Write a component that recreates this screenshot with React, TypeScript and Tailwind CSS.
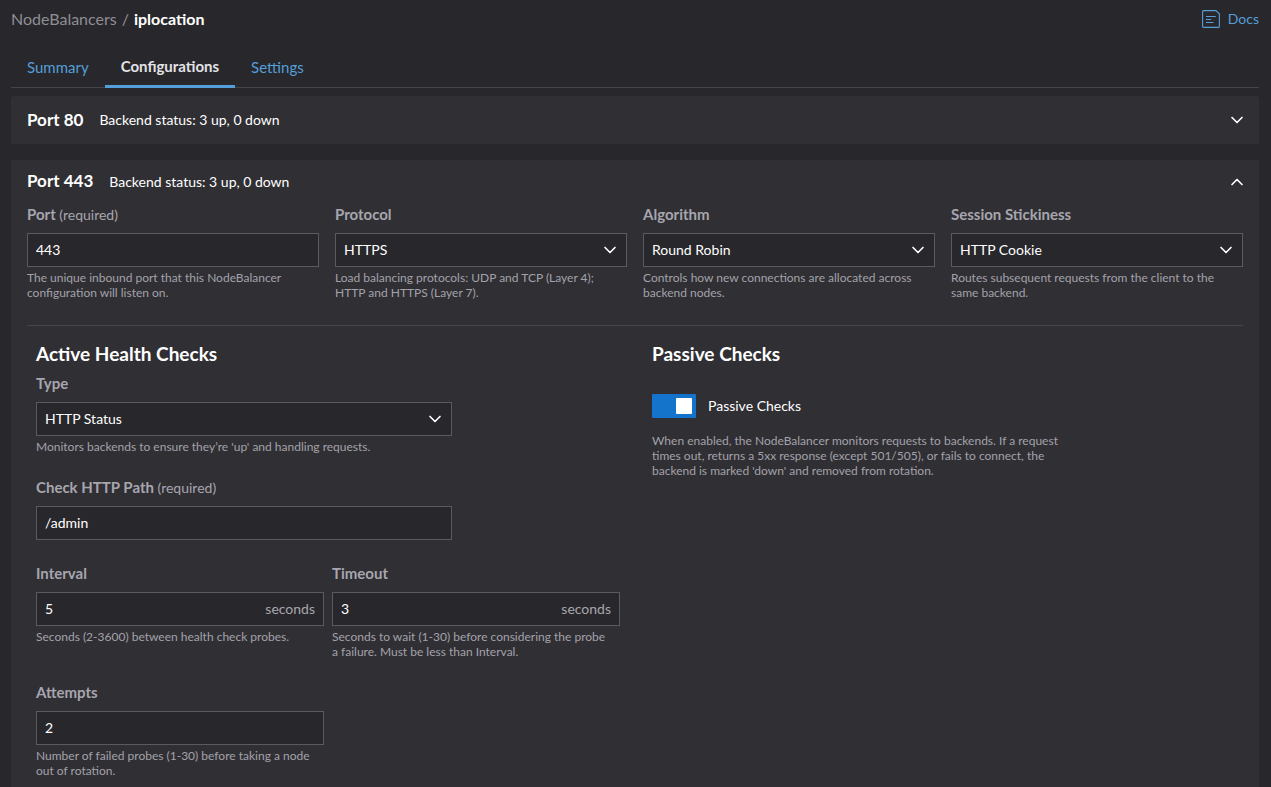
import React, { useState } from 'react';
import { ChevronDown, ChevronUp } from 'lucide-react';

interface FieldProps {
  id: string;
  label: string;
  required?: boolean;
  helper?: string;
  className?: string;
  children: React.ReactNode;
}

const Field: React.FC<FieldProps> = ({ id, label, required, helper, className, children }) => (
  <div className={className}>
    <label htmlFor={id} className="mb-2 block h-[22px] text-[15px] leading-[22px] font-bold text-[#a7a6ae]">
      {label}
      {required && <span className="text-sm leading-[22px] font-normal"> (required)</span>}
    </label>
    {children}
    {helper && <p className="mt-[3px] pr-2 text-xs leading-[15px] text-[#a3a2aa]">{helper}</p>}
  </div>
);

interface TextInputProps {
  id: string;
  initial: string;
  suffix?: string;
}

const TextInput: React.FC<TextInputProps> = ({ id, initial, suffix }) => {
  const [value, setValue] = useState(initial);

  return (
    <div className="flex h-[34px] items-center border border-[#5b5a61] bg-[#28272b] px-2 text-sm focus-within:border-[#539fd9]">
      <input
        id={id}
        type="text"
        value={value}
        onChange={(e) => setValue(e.target.value)}
        className="min-w-0 flex-1 bg-transparent text-white focus:outline-none"
      />
      {suffix && <span className="text-[#a7a6ae]">{suffix}</span>}
    </div>
  );
};

interface SelectInputProps {
  id: string;
  options: string[];
}

const SelectInput: React.FC<SelectInputProps> = ({ id, options }) => (
  <div className="relative">
    <select
      id={id}
      className="block h-[34px] w-full appearance-none border border-[#5b5a61] bg-[#28272b] px-2 text-sm text-white focus:border-[#539fd9] focus:outline-none"
    >
      {options.map((option) => (
        <option key={option}>{option}</option>
      ))}
    </select>
    <ChevronDown className="pointer-events-none absolute top-[7px] right-[7px] size-5 text-white" />
  </div>
);

const DocsIcon: React.FC = () => (
  <svg viewBox="0 0 18 18" className="size-[18px]" fill="none" stroke="currentColor">
    <path d="M1.4 .6h12.6l3.4 3.4v12.6a.8.8 0 0 1-.8.8h-15.2a.8.8 0 0 1-.8-.8v-15.2a.8.8 0 0 1 .8-.8z" strokeWidth="1.1" />
    <path d="M4 6.5h9.8M4 9.5h5.2M4 12.5h7.5" strokeWidth="1.1" />
  </svg>
);

const tabs = ['Summary', 'Configurations', 'Settings'];

const App: React.FC = () => {
  const [activeTab, setActiveTab] = useState('Configurations');
  const [passive, setPassive] = useState(true);

  return (
    <div className="min-h-screen bg-[#28272b] pr-3 pl-[11px] font-['Lato',sans-serif] text-sm text-white">
      <header className="flex h-[38px] items-center justify-between">
        <nav className="text-base">
          <a href="#nodebalancers" className="text-[#8f8e94]">NodeBalancers</a>
          <span className="px-[5px] text-[#8f8e94]">/</span>
          <span className="font-bold">iplocation</span>
        </nav>
        <a href="#docs" className="flex items-center gap-2 text-[#539fd9]">
          <DocsIcon />
          Docs
        </a>
      </header>

      <div role="tablist" className="mt-[10px] flex h-10 border-b border-[#45444a] text-[15px]">
        {tabs.map((tab) => (
          <button
            key={tab}
            role="tab"
            aria-selected={tab === activeTab}
            onClick={() => setActiveTab(tab)}
            className={
              tab === activeTab
                ? '-mb-px border-b-[3px] border-[#539fd9] px-4 font-bold text-[#e3e3e6]'
                : 'px-4 text-[#539fd9]'
            }
          >
            {tab}
          </button>
        ))}
      </div>

      <section className="mt-2 rounded-t-[3px] bg-[#302f34]">
        <button aria-expanded="false" className="flex h-12 w-full items-center pr-3 pl-4 text-left">
          <span className="text-[17px] font-bold">Port 80</span>
          <span className="ml-4 flex-1">Backend status: 3 up, 0 down</span>
          <ChevronDown className="size-5" />
        </button>
      </section>

      <section className="mt-4 bg-[#302f34] pb-8">
        <button aria-expanded="true" className="flex h-[43px] w-full items-center pr-3 pl-4 text-left">
          <span className="text-[17px] font-bold">Port 443</span>
          <span className="ml-4 flex-1">Backend status: 3 up, 0 down</span>
          <ChevronUp className="size-5" />
        </button>

        <div className="mx-4 grid grid-cols-4 gap-4 border-b border-[#45444a] pb-[25px]">
          <Field id="port" label="Port" required helper="The unique inbound port that this NodeBalancer configuration will listen on.">
            <TextInput id="port" initial="443" />
          </Field>
          <Field id="protocol" label="Protocol" helper="Load balancing protocols: UDP and TCP (Layer 4); HTTP and HTTPS (Layer 7).">
            <SelectInput id="protocol" options={['HTTPS', 'HTTP', 'TCP', 'UDP']} />
          </Field>
          <Field id="algorithm" label="Algorithm" helper="Controls how new connections are allocated across backend nodes.">
            <SelectInput id="algorithm" options={['Round Robin', 'Least Connections', 'Source']} />
          </Field>
          <Field id="stickiness" label="Session Stickiness" helper="Routes subsequent requests from the client to the same backend.">
            <SelectInput id="stickiness" options={['HTTP Cookie', 'Table', 'None']} />
          </Field>
        </div>

        <div className="grid grid-cols-2 px-2 pt-4">
          <div className="pr-[15px] pl-[17px]">
            <h2 className="mb-[6px] text-[19px] leading-6 font-bold">Active Health Checks</h2>
            <div className="flex flex-col gap-[22px]">
              <Field
                id="type"
                label="Type"
                helper="Monitors backends to ensure they’re 'up' and handling requests."
                className="max-w-[416px]"
              >
                <SelectInput id="type" options={['HTTP Status', 'HTTP Body', 'TCP Connection', 'None']} />
              </Field>
              <Field id="path" label="Check HTTP Path" required className="max-w-[416px]">
                <TextInput id="path" initial="/admin" />
              </Field>
              <div className="grid grid-cols-2 gap-x-2 gap-y-[22px]">
                <Field id="interval" label="Interval" helper="Seconds (2-3600) between health check probes.">
                  <TextInput id="interval" initial="5" suffix="seconds" />
                </Field>
                <Field id="timeout" label="Timeout" helper="Seconds to wait (1-30) before considering the probe a failure. Must be less than Interval.">
                  <TextInput id="timeout" initial="3" suffix="seconds" />
                </Field>
                <Field id="attempts" label="Attempts" helper="Number of failed probes (1-30) before taking a node out of rotation.">
                  <TextInput id="attempts" initial="2" />
                </Field>
              </div>
            </div>
          </div>

          <div className="pr-[15px] pl-[17px]">
            <h2 className="text-[19px] leading-6 font-bold">Passive Checks</h2>
            <label className="mt-7 flex w-fit cursor-pointer items-center gap-3">
              <input
                type="checkbox"
                role="switch"
                checked={passive}
                onChange={(e) => setPassive(e.target.checked)}
                className="peer sr-only"
              />
              <span className="flex h-6 w-11 items-center rounded-[1px] bg-[#6b6a70] px-1 peer-checked:justify-end peer-checked:bg-[#1474cc]">
                <span className="size-4 rounded-[1px] bg-white" />
              </span>
              Passive Checks
            </label>
            <p className="mt-[15px] max-w-[424px] text-xs leading-[15px] text-[#a3a2aa]">
              When enabled, the NodeBalancer monitors requests to backends. If a request times out, returns a 5xx
              response (except 501/505), or fails to connect, the backend is marked 'down' and removed from rotation.
            </p>
          </div>
        </div>
      </section>
    </div>
  );
};

export default App;
